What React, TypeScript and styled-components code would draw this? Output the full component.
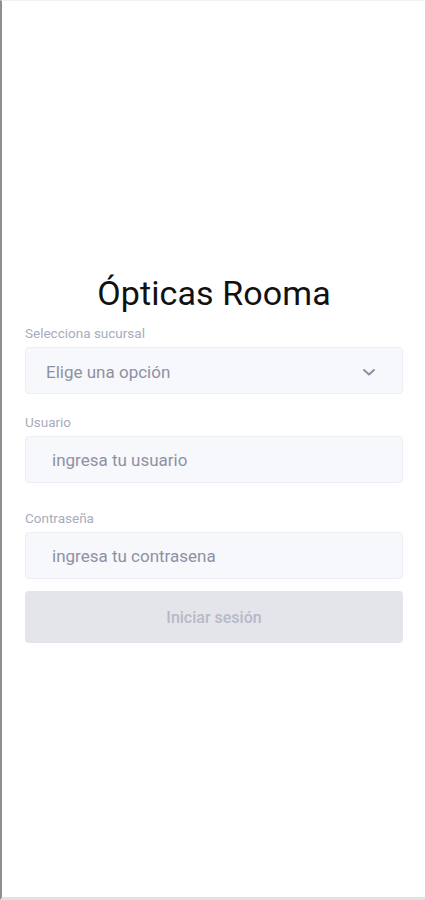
import styled, { createGlobalStyle } from 'styled-components';

const GlobalStyle = createGlobalStyle`
  html, body {
    margin: 0;
    padding: 0;
    background: #ffffff;
  }
  * {
    box-sizing: border-box;
  }
`;

const Screen = styled.div`
  width: 425px;
  height: 900px;
  border-left: 2px solid #8e8e8e;
  border-top: 1px solid #f2f2f2;
  border-bottom: 3px solid #e2e2e2;
  background: #ffffff;
  padding: 272px 22px 0 23px;
  font-family: Roboto, 'Liberation Sans', sans-serif;
`;

const Title = styled.h1`
  margin: 0 0 12px;
  text-align: center;
  font-size: 34px;
  line-height: 40px;
  font-weight: 400;
  color: #111111;
  letter-spacing: 0.1px;
`;

const Field = styled.div<{ $gap: number }>`
  display: flex;
  flex-direction: column;
  margin-top: ${({ $gap }) => $gap}px;
`;

const Label = styled.label`
  font-size: 13.5px;
  line-height: 16px;
  color: #a8acbd;
  margin-bottom: 6px;
`;

const SelectBox = styled.div`
  display: flex;
  align-items: center;
  justify-content: space-between;
  height: 47px;
  padding: 2px 26px 0 20px;
  background: #f7f8fb;
  border: 1px solid #eceef3;
  border-radius: 4px;
  font-size: 17px;
  color: #8d91a4;
`;

const Input = styled.input`
  height: 47px;
  padding: 1px 26px 0;
  background: #f7f8fb;
  border: 1px solid #eceef3;
  border-radius: 4px;
  font-family: inherit;
  font-size: 17px;
  color: #333;
  outline: none;
  &::placeholder {
    color: #8d91a4;
  }
`;

const SubmitButton = styled.button`
  margin-top: 12px;
  width: 100%;
  height: 52px;
  border: none;
  border-radius: 4px;
  background: #e3e5eb;
  color: #b6b9c6;
  font-family: inherit;
  font-size: 16px;
  font-weight: 500;
`;

const Chevron = () => (
  <svg width="14" height="10" viewBox="0 0 14 10" fill="none">
    <path d="M2 3 L7 7.5 L12 3" stroke="#8b90a3" strokeWidth="2" strokeLinecap="round" strokeLinejoin="round" />
  </svg>
);

const App = () => (
  <>
    <GlobalStyle />
    <Screen>
      <Title>Ópticas Rooma</Title>
      <Field $gap={0}>
        <Label>Selecciona sucursal</Label>
        <SelectBox>
          <span>Elige una opción</span>
          <Chevron />
        </SelectBox>
      </Field>
      <Field $gap={20}>
        <Label>Usuario</Label>
        <Input placeholder="ingresa tu usuario" />
      </Field>
      <Field $gap={27}>
        <Label>Contraseña</Label>
        <Input type="password" placeholder="ingresa tu contrasena" />
      </Field>
      <SubmitButton disabled>Iniciar sesión</SubmitButton>
    </Screen>
  </>
);

export default App;
